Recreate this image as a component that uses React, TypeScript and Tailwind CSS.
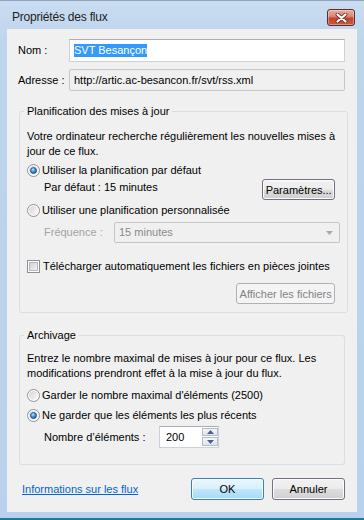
import { useId, type ReactNode } from "react";

function Radio({ checked }: { checked?: boolean }) {
  const id = useId().replace(/:/g, "");
  return (
    <svg width="13" height="13" viewBox="0 0 13 13" className="shrink-0">
      <defs>
        <linearGradient id={`ring-${id}`} x1="0" y1="0" x2="1" y2="1">
          <stop offset="0" stopColor="#d4d4d4" />
          <stop offset="1" stopColor="#fbfbfb" />
        </linearGradient>
        <radialGradient id={`dot-${id}`} cx="0.4" cy="0.35" r="0.7">
          <stop offset="0" stopColor="#bfe6ff" />
          <stop offset="0.45" stopColor="#4c9be0" />
          <stop offset="1" stopColor="#17508f" />
        </radialGradient>
      </defs>
      <circle cx="6.5" cy="6.5" r="6" fill="#fff" stroke="#8e8f8f" />
      <circle cx="6.5" cy="6.5" r="4.5" fill={`url(#ring-${id})`} />
      {checked ? (
        <circle cx="6.5" cy="6.5" r="3" fill={`url(#dot-${id})`} stroke="#1c4a80" strokeWidth="0.8" />
      ) : null}
    </svg>
  );
}

function Checkbox() {
  return (
    <svg width="13" height="13" viewBox="0 0 13 13" className="shrink-0">
      <defs>
        <linearGradient id="cb-fill" x1="0" y1="0" x2="1" y2="1">
          <stop offset="0" stopColor="#cbcfd5" />
          <stop offset="1" stopColor="#f6f6f6" />
        </linearGradient>
      </defs>
      <rect x="0.5" y="0.5" width="12" height="12" fill="#fff" stroke="#8e8f8f" />
      <rect x="2.5" y="2.5" width="8" height="8" fill="url(#cb-fill)" stroke="#b4b8be" />
    </svg>
  );
}

function Button({
  children,
  variant = "normal",
  className = "",
}: {
  children: ReactNode;
  variant?: "normal" | "default" | "disabled";
  className?: string;
}) {
  const look =
    variant === "default"
      ? "border-[#3c7fb1] bg-[linear-gradient(180deg,#eaf6fd_0%,#d9f0fc_50%,#bee6fd_50%,#a7d9f5_100%)] shadow-[inset_0_0_0_1px_#f4fbff]"
      : variant === "disabled"
        ? "border-[#adb2b5] bg-[#f4f4f4] text-[#838383]"
        : "border-[#756d80] bg-[linear-gradient(180deg,#f2f2f2_0%,#ebebeb_50%,#dddddd_50%,#cfcfcf_100%)] shadow-[inset_0_0_0_1px_#fcfcfc]";
  return (
    <div
      className={[
        "flex items-center justify-center rounded-[3px] border leading-[14px]",
        look,
        className,
      ].join(" ")}
    >
      {children}
    </div>
  );
}

function RadioRow({ label, checked, className = "" }: { label: string; checked?: boolean; className?: string }) {
  return (
    <div className={["flex h-[16px] items-center gap-[2px]", className].join(" ")}>
      <Radio checked={checked} />
      <span className="leading-[15px]">{label}</span>
    </div>
  );
}

function CloseButton() {
  return (
    <div className="mt-[8px] flex h-[17px] w-[28px] items-center justify-center rounded-[3px] border border-[#5e2b2b] bg-[linear-gradient(180deg,#e9ac9e_0%,#d8887a_42%,#c2452f_55%,#cd5a3f_100%)] shadow-[inset_0_0_0_1px_rgba(255,255,255,0.35)]">
      <svg width="13" height="10" viewBox="0 0 13 10">
        <path d="M2.5 1.5 L10.5 8.5 M10.5 1.5 L2.5 8.5" stroke="#6d2d24" strokeWidth="3.8" strokeLinecap="round" />
        <path d="M2.5 1.5 L10.5 8.5 M10.5 1.5 L2.5 8.5" stroke="#ffffff" strokeWidth="2.2" strokeLinecap="round" />
      </svg>
    </div>
  );
}

function SpinBox() {
  return (
    <div className="flex h-[22px] w-[60px] items-center border border-[#cdd2da] border-t-[#abadb3] bg-white">
      <span className="pl-[6px] leading-[15px]">200</span>
      <div className="ml-auto flex flex-col gap-[1px]">
        <div className="flex h-[8px] w-[16px] items-center justify-center border border-[#b5bcc8] bg-[linear-gradient(180deg,#f4f6f9,#dfe4ec)]">
          <svg width="7" height="4" viewBox="0 0 7 4">
            <path d="M0 4 L3.5 0 L7 4 Z" fill="#4f6088" />
          </svg>
        </div>
        <div className="flex h-[9px] w-[16px] items-center justify-center border border-[#b5bcc8] bg-[linear-gradient(180deg,#f4f6f9,#dfe4ec)]">
          <svg width="7" height="4" viewBox="0 0 7 4">
            <path d="M0 0 L3.5 4 L7 0 Z" fill="#4f6088" />
          </svg>
        </div>
      </div>
    </div>
  );
}

export default function App() {
  return (
    <div className="flex h-[520px] w-[364px] flex-col border-t border-b-2 border-t-[#8fa4bb] border-b-[#1b7c95] bg-[linear-gradient(180deg,#c9dcf1_0%,#bed5ec_40px,#b9d1ea_100%)] font-['Liberation_Sans',Arial,sans-serif] text-[11px] text-black">
      <div className="flex h-[28px] shrink-0 items-start justify-between pl-[12px] pr-[9px]">
        <span className="mt-[8px] text-[12px] leading-[16px] tracking-[-0.2px] text-[#1e1e1e]">
          Propriétés des flux
        </span>
        <CloseButton />
      </div>

      <div className="mx-[7px] flex h-[483px] flex-col bg-[#f0f0f0] px-[12px]">
        <div className="mt-[10px] flex items-center">
          <span className="-ml-[1px] w-[51px]">Nom :</span>
          <div className="flex h-[23px] flex-1 items-center border border-[#cdd2da] border-t-[#abadb3] bg-white pl-[4px]">
            <span className="bg-[#3399ff] leading-[13px] text-white">SVT Besançon</span>
          </div>
        </div>

        <div className="mt-[7px] flex items-center">
          <span className="-ml-[1px] w-[51px]">Adresse :</span>
          <div className="flex h-[22px] flex-1 items-center rounded-[2px] border border-[#c6c6c6] pl-[4px]">
            http://artic.ac-besancon.fr/svt/rss.xml
          </div>
        </div>

        <fieldset className="mt-[13px] flex flex-col rounded-[3px] border border-[#d5dfe5] pb-[8px] pl-[7px] pr-[12px] pt-[11px]">
          <legend className="-ml-[3px] px-[3px] leading-[14px]">Planification des mises à jour</legend>
          <p className="whitespace-nowrap leading-[15px]">
            Votre ordinateur recherche régulièrement les nouvelles mises à
            <br />
            jour de ce flux.
          </p>
          <RadioRow className="mt-[3px]" checked label="Utiliser la planification par défaut" />
          <div className="mt-[1px] flex items-start justify-between pl-[17px]">
            <span className="mt-[1px] leading-[15px]">Par défaut : 15 minutes</span>
            <Button className="h-[21px] w-[73px]">Paramètres...</Button>
          </div>
          <RadioRow className="mt-[2px]" label="Utiliser une planification personnalisée" />
          <div className="mt-[4px] flex items-center pl-[17px]">
            <span className="w-[70px] text-[#a3a3a3]">Fréquence :</span>
            <div className="-mr-[5px] flex h-[21px] flex-1 items-center justify-between rounded-[2px] border border-[#c5c5c5] pl-[4px] pr-[6px] text-[#8a8a8a]">
              <span>15 minutes</span>
              <svg width="7" height="4" viewBox="0 0 7 4">
                <path d="M0 0 L3.5 4 L7 0 Z" fill="#a8a8a8" />
              </svg>
            </div>
          </div>
          <div className="mt-[15px] flex h-[16px] items-center gap-[3px]">
            <Checkbox />
            <span className="leading-[15px]">Télécharger automatiquement les fichiers en pièces jointes</span>
          </div>
          <Button variant="disabled" className="mt-[9px] h-[21px] w-[99px] self-end">
            Afficher les fichiers
          </Button>
        </fieldset>

        <fieldset className="mt-[15px] flex flex-col rounded-[3px] border border-[#d5dfe5] pb-[16px] pl-[7px] pr-[12px] pt-[9px]">
          <legend className="-ml-[3px] px-[3px] leading-[14px]">Archivage</legend>
          <p className="whitespace-nowrap leading-[15px]">
            Entrez le nombre maximal de mises à jour pour ce flux. Les
            <br />
            modifications prendront effet à la mise à jour du flux.
          </p>
          <RadioRow className="mt-[6px]" label="Garder le nombre maximal d'éléments (2500)" />
          <RadioRow className="mt-[4px]" checked label="Ne garder que les éléments les plus récents" />
          <div className="mt-[3px] flex items-center pl-[17px]">
            <span className="w-[115px]">Nombre d’éléments :</span>
            <SpinBox />
          </div>
        </fieldset>

        <div className="mt-[13px] flex items-center">
          <a href="#" className="ml-[3px] text-[#0066cc] underline">
            Informations sur les flux
          </a>
          <div className="ml-auto flex gap-[8px]">
            <Button variant="default" className="h-[22px] w-[73px]">
              OK
            </Button>
            <Button className="h-[22px] w-[73px]">Annuler</Button>
          </div>
        </div>
      </div>
    </div>
  );
}
